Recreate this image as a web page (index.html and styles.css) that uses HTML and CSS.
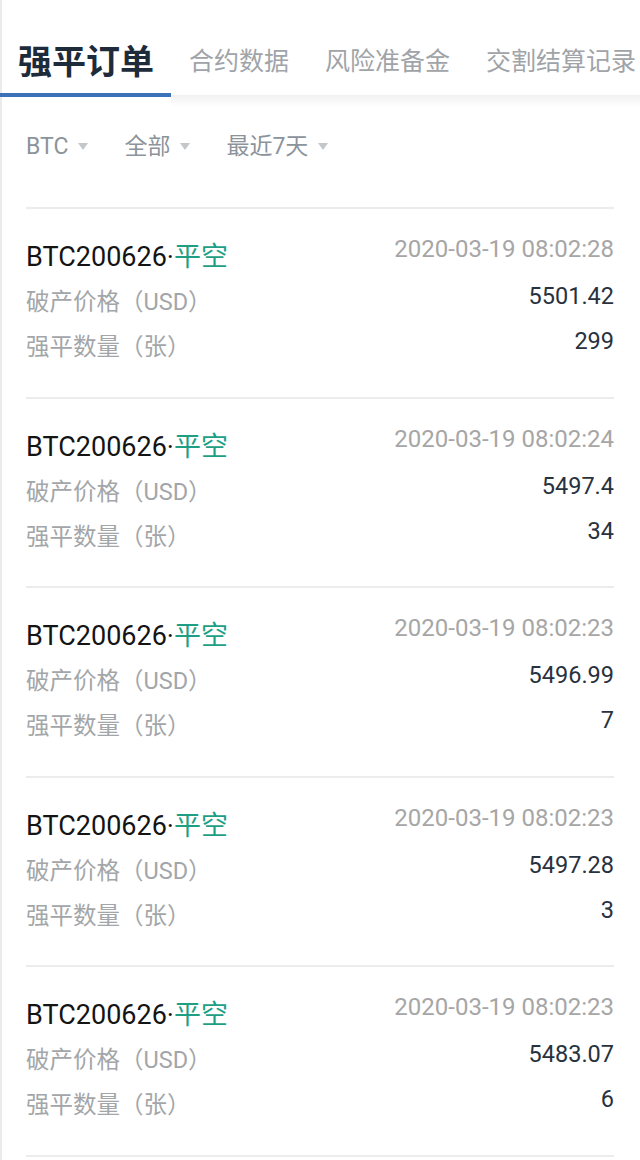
FILE: index.html
```html
<!DOCTYPE html>
<html lang="zh">
<head>
<meta charset="utf-8">
<link rel="stylesheet" href="styles.css">
</head>
<body>
<div class="page">
  <div class="tabs">
    <div class="tab active">强平订单</div>
    <div class="tab">合约数据</div>
    <div class="tab">风险准备金</div>
    <div class="tab">交割结算记录</div>
  </div>
  <div class="filters">
    <div class="filter">BTC<span class="tri"></span></div>
    <div class="filter">全部<span class="tri"></span></div>
    <div class="filter">最近7天<span class="tri"></span></div>
  </div>
  <div class="list">
    <div class="row">
      <div class="left">
        <div class="title">BTC200626·<span class="side">平空</span></div>
        <div class="label">破产价格（USD）</div>
        <div class="label">强平数量（张）</div>
      </div>
      <div class="right">
        <div class="date">2020-03-19 08:02:28</div>
        <div class="val">5501.42</div>
        <div class="val">299</div>
      </div>
    </div>
    <div class="row">
      <div class="left">
        <div class="title">BTC200626·<span class="side">平空</span></div>
        <div class="label">破产价格（USD）</div>
        <div class="label">强平数量（张）</div>
      </div>
      <div class="right">
        <div class="date">2020-03-19 08:02:24</div>
        <div class="val">5497.4</div>
        <div class="val">34</div>
      </div>
    </div>
    <div class="row">
      <div class="left">
        <div class="title">BTC200626·<span class="side">平空</span></div>
        <div class="label">破产价格（USD）</div>
        <div class="label">强平数量（张）</div>
      </div>
      <div class="right">
        <div class="date">2020-03-19 08:02:23</div>
        <div class="val">5496.99</div>
        <div class="val">7</div>
      </div>
    </div>
    <div class="row">
      <div class="left">
        <div class="title">BTC200626·<span class="side">平空</span></div>
        <div class="label">破产价格（USD）</div>
        <div class="label">强平数量（张）</div>
      </div>
      <div class="right">
        <div class="date">2020-03-19 08:02:23</div>
        <div class="val">5497.28</div>
        <div class="val">3</div>
      </div>
    </div>
    <div class="row">
      <div class="left">
        <div class="title">BTC200626·<span class="side">平空</span></div>
        <div class="label">破产价格（USD）</div>
        <div class="label">强平数量（张）</div>
      </div>
      <div class="right">
        <div class="date">2020-03-19 08:02:23</div>
        <div class="val">5483.07</div>
        <div class="val">6</div>
      </div>
    </div>
    <div class="row last"></div>
  </div>
</div>
</body>
</html>
```
FILE: styles.css
```css
* { box-sizing: border-box; }
html, body { margin: 0; padding: 0; background: #fff; }
body {
  font-family: Roboto, "Noto Sans CJK SC", sans-serif;
  width: 640px;
  height: 1160px;
  overflow: hidden;
}
.page {
  width: 640px;
  height: 1160px;
  border-left: 2px solid #ebebeb;
  position: relative;
}
.tabs {
  display: flex;
  white-space: nowrap;
  height: 97px;
  position: relative;
  margin-left: -2px;
}
.tabs::after {
  content: "";
  position: absolute;
  left: 171px;
  right: 0;
  top: 95px;
  height: 12px;
  background: linear-gradient(#f1f1f1, rgba(255,255,255,0));
}
.tab {
  padding: 30px 18px 0;
  line-height: 64px;
  height: 97px;
  font-size: 25px;
  color: #a0a4a8;
  border-bottom: 3px solid transparent;
  flex: none;
}
.tab.active {
  font-size: 34px;
  font-weight: 700;
  color: #1d2b3a;
  border-bottom: 4px solid #3c72b9;
  padding-right: 17px;
}
.filters {
  display: flex;
  margin-top: 30px;
  padding-left: 24px;
  height: 40px;
  line-height: 40px;
  gap: 36px;
}
.filter {
  font-size: 23px;
  color: #8c939b;
  display: flex;
  align-items: center;
}
.tri {
  display: inline-block;
  width: 0;
  height: 0;
  margin-left: 10px;
  margin-top: -2px;
  border-left: 5px solid transparent;
  border-right: 5px solid transparent;
  border-top: 7px solid #c4c7ca;
}
.list {
  margin-top: 40px;
  padding: 0 26px 0 24px;
}
.row {
  height: 189.5px;
  border-top: 2px solid #ececec;
  display: flex;
  justify-content: space-between;
}
.row.last { height: 10px; }
.left { padding-top: 26px; }
.left > div { line-height: 45px; height: 45px; }
.title {
  font-size: 27px;
  color: #141414;
}
.side { color: #1e9f85; }
.label {
  font-size: 23.5px;
  color: #a3a6a9;
}
.right {
  padding-top: 18px;
  text-align: right;
}
.date {
  font-size: 24px;
  color: #a6a6a6;
  line-height: 44px;
  height: 44px;
  margin-bottom: 3px;
}
.val {
  font-size: 23.5px;
  color: #28323e;
  line-height: 45px;
  height: 45px;
}
```
